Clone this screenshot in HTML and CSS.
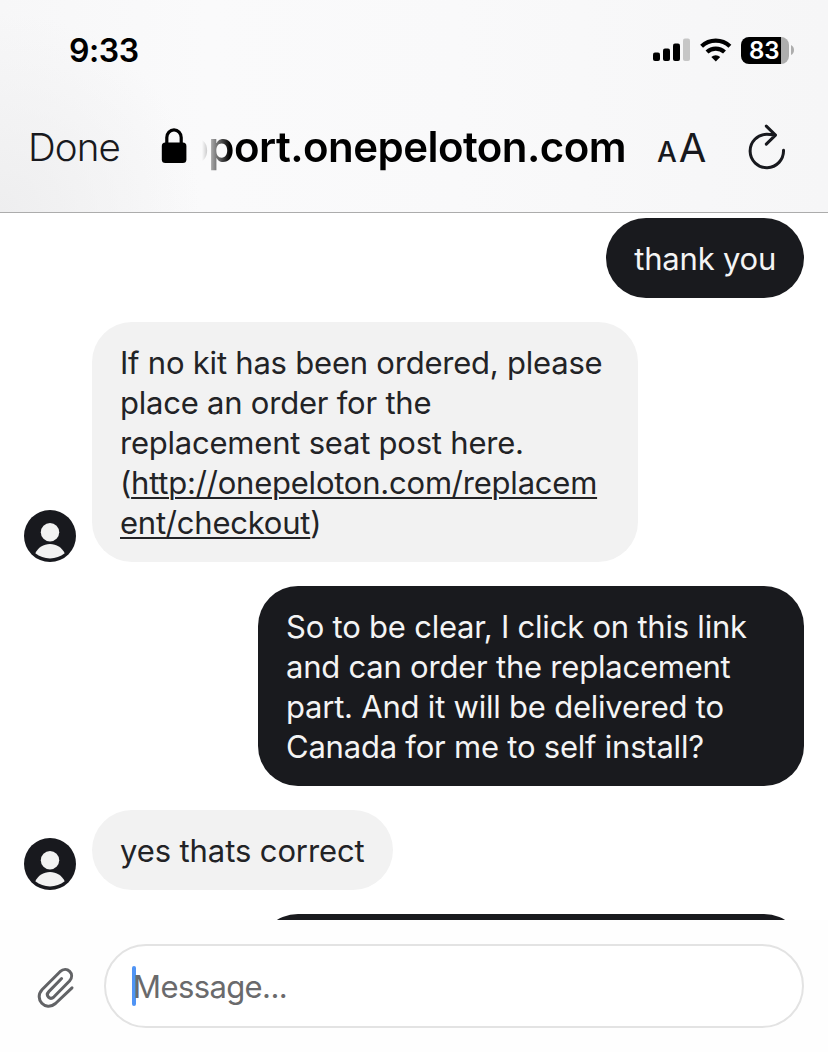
FILE: index.html
```html
<!DOCTYPE html>
<html lang="en">
<head>
    <meta charset="UTF-8">
    <meta name="viewport" content="width=device-width, initial-scale=1.0">
    <title>Chat</title>
    <link rel="stylesheet" href="styles.css">
</head>
<body>
    <header class="header">
        <div class="status-bar">
            <span class="time">9:33</span>
            <div class="status-icons">
                <svg class="signal" width="38" height="24" viewBox="0 0 38 24">
                    <rect x="0" y="14.5" width="7" height="8.5" rx="2"/>
                    <rect x="10" y="10.5" width="7" height="12.5" rx="2"/>
                    <rect x="20" y="5.5" width="7" height="17.5" rx="2"/>
                    <rect x="30" y="0.5" width="7" height="22.5" rx="2" fill="#c6c6c6"/>
                </svg>
                <svg class="wifi" width="34" height="24" viewBox="0 0 34 24">
                    <g fill="none" stroke="#000" stroke-width="4.2">
                        <path d="M2.6 8.2a20.6 20.6 0 0 1 28.3 0"/>
                        <path d="M8 14a12.8 12.8 0 0 1 17.5 0"/>
                    </g>
                    <path d="M12.3 18.9a6.6 6.6 0 0 1 8.9 0l-4.4 4.6z"/>
                </svg>
                <div class="battery"><span>83</span></div>
                <svg class="battery-cap" width="3" height="10" viewBox="0 0 3 10"><path d="M0 0q3 1.5 3 5t-3 5z"/></svg>
            </div>
        </div>
        <div class="nav-bar">
            <span class="done">Done</span>
            <svg class="lock" width="26" height="36" viewBox="0 0 26 36">
                <path d="M5.8 18V9.5a7.2 7.7 0 0 1 14.4 0V18" fill="none" stroke="#000" stroke-width="3.2"/>
                <rect x="0.8" y="14.5" width="24.6" height="20.6" rx="3.6"/>
            </svg>
            <div class="url"><span>support.onepeloton.com</span></div>
            <div class="text-size"><span class="small-a">A</span><span class="big-a">A</span></div>
            <svg class="reload" width="38" height="46" viewBox="0 0 38 46">
                <path d="M35.5 26.3A16.7 16.7 0 1 1 18.8 10.3q3 0 7.6.7M18.3 2.1l9.2 9-9.2 9"/>
            </svg>
        </div>
    </header>

    <main class="chat">
        <div class="row sent">
            <div class="bubble">thank you</div>
        </div>
        <div class="row">
            <svg class="avatar" viewBox="0 0 52 52">
                <circle cx="26" cy="26" r="26" fill="#18191e"/>
                <circle cx="26" cy="22.2" r="9.2"/>
                <path d="M11.3 43.3C14 37.5 19.5 34 26 34s12 3.5 14.7 9.3C36.5 46.8 31.5 48.4 26 48.4s-10.5-1.6-14.7-5.1z"/>
            </svg>
            <div class="bubble">If no kit has been ordered, please place an order for the replacement seat post here. (<a>http://onepeloton.com/replacem<wbr>ent/checkout</a>)</div>
        </div>
        <div class="row sent">
            <div class="bubble">So to be clear, I click on this link and can order the replacement part. And it will be delivered to Canada for me to self install?</div>
        </div>
        <div class="row">
            <svg class="avatar" viewBox="0 0 52 52">
                <circle cx="26" cy="26" r="26" fill="#18191e"/>
                <circle cx="26" cy="22.2" r="9.2"/>
                <path d="M11.3 43.3C14 37.5 19.5 34 26 34s12 3.5 14.7 9.3C36.5 46.8 31.5 48.4 26 48.4s-10.5-1.6-14.7-5.1z"/>
            </svg>
            <div class="bubble short">yes thats correct</div>
        </div>
        <div class="row sent">
            <div class="bubble next"></div>
        </div>
    </main>

    <footer class="composer">
        <svg class="clip" width="38" height="42" viewBox="0 0 38 42">
            <path d="M24.6 11.5L11.8 24.6c-3.8 4 1.2 9 5.2 5.2L32.5 14c6.2-7-2.6-15.5-9.5-9.3L5.2 22.5C-3.5 32 8.5 45 18.5 36.5L35 20.8"/>
        </svg>
        <div class="field"><span class="caret"></span><span class="placeholder">Message...</span></div>
    </footer>
</body>
</html>
```

FILE: styles.css
```css
* {
    box-sizing: border-box;
}

body {
    margin: 0;
    height: 1052px;
    display: flex;
    flex-direction: column;
    overflow: hidden;
    background: #fff;
    font-family: Inter, "Liberation Sans", sans-serif;
    color: #222326;
}

.header {
    height: 213px;
    flex: none;
    border-bottom: 1px solid #acacac;
    background: radial-gradient(circle at 0 100%, #eeeeef 0, rgba(249, 249, 250, 0) 200px), linear-gradient(90deg, #f7f7f8, #fafafb 25%, #f9f9fa 55%, #f6f6f7);
}

.status-bar {
    height: 100px;
    padding: 0 34px 0 69px;
    display: flex;
    align-items: center;
    justify-content: space-between;
}

.time {
    font-size: 32px;
    font-weight: 600;
    letter-spacing: -0.4px;
    color: #000;
}

.status-icons {
    display: flex;
    align-items: center;
}

.wifi {
    margin: 0 8px;
}

.battery {
    width: 48px;
    height: 27px;
    border-radius: 8px;
    background: linear-gradient(90deg, #000 40px, #adadad 40px);
    color: #fff;
    font-size: 24px;
    font-weight: 600;
    line-height: 27px;
    padding-left: 8px;
}

.battery-cap {
    margin-left: 2px;
    fill: #adadad;
}

.nav-bar {
    height: 94px;
    padding-left: 28px;
    display: flex;
    align-items: center;
}

.done {
    width: 133px;
    font-size: 38.5px;
    font-weight: 350;
    letter-spacing: -0.9px;
    color: #18191e;
}

.lock {
    margin-top: -2px;
}

.url {
    width: 424px;
    margin: -2px 0 0 15px;
    display: flex;
    justify-content: flex-end;
    overflow: hidden;
    font-size: 42px;
    font-weight: 600;
    letter-spacing: -0.55px;
    color: #000;
    -webkit-mask-image: linear-gradient(90deg, transparent, #000 28px);
    mask-image: linear-gradient(90deg, transparent, #000 28px);
}

.text-size {
    width: 50px;
    margin-left: 31px;
    display: flex;
    align-items: baseline;
    gap: 2px;
    color: #18191e;
}

.small-a {
    font-size: 28px;
    font-weight: 500;
}

.big-a {
    font-size: 40px;
}

.reload {
    margin-left: 41px;
    fill: none;
    stroke: #18191e;
    stroke-width: 3;
    stroke-linecap: round;
    stroke-linejoin: round;
}

.chat {
    height: 707px;
    flex: none;
    padding: 5px 24px 0;
    display: flex;
    flex-direction: column;
    gap: 24px;
    overflow: hidden;
}

.row {
    display: flex;
    align-items: flex-end;
    gap: 16px;
}

.sent {
    justify-content: flex-end;
}

.avatar {
    width: 52px;
    height: 52px;
    flex: none;
    fill: #f2f2f2;
}

.bubble {
    max-width: 546px;
    padding: 21px 28px 19px;
    border-radius: 40px;
    background: #f2f2f2;
    font-size: 31px;
    line-height: 40px;
    letter-spacing: -0.22px;
}

.bubble a {
    text-decoration: underline;
    text-decoration-thickness: 2px;
    text-underline-offset: 3px;
}

.short {
    letter-spacing: -0.1px;
}

.sent .bubble {
    background: #191a1e;
    color: #f4f4f4;
}

.next {
    width: 546px;
    height: 80px;
}

.composer {
    flex: 1;
    padding: 24px 24px 24px 37px;
    display: flex;
    align-items: center;
    background: #fefefe;
}

.clip {
    margin-top: 4px;
    fill: none;
    stroke: #626366;
    stroke-width: 3;
    stroke-linecap: round;
    stroke-linejoin: round;
}

.field {
    flex: 1;
    height: 84px;
    margin-left: 29px;
    padding-left: 26px;
    display: flex;
    align-items: center;
    border: 2px solid #e3e3e3;
    border-radius: 42px;
    background: #fff;
}

.caret {
    width: 4px;
    height: 40px;
    border-radius: 2px;
    background: #5094f5;
}

.placeholder {
    margin-left: -3px;
    font-size: 31px;
    letter-spacing: -0.6px;
    color: #6a6a6c;
}
```
